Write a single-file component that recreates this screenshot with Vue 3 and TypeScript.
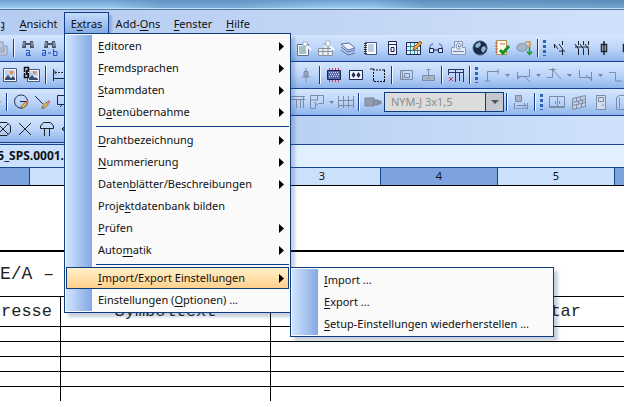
<script setup lang="ts">
import { ref } from 'vue'

interface Shape {
  d: string
  fill?: string
  stroke?: string
  width?: number
}

interface Tool {
  kind: 'icon' | 'sep' | 'grip' | 'arrow' | 'combo'
  icon?: string
  label?: string
}

interface Entry {
  label?: string
  children?: boolean
  separator?: boolean
}

const navy = '#1c2350'
const grey = '#7d8ba6'

const icons: Record<string, Shape[]> = {
  paste: [
    { d: 'M4 3h8v4h4v9H6v-2H4z', fill: '#c3cddd', stroke: '#8b98b2' },
    { d: 'M8 9h6M8 11h6M8 13h6', stroke: '#8b98b2' }
  ],
  find: [
    { d: 'M4 2h3v2h4V2h3l1 7h-4V6H7v3H3z', fill: '#4b5563' },
    { d: 'M5 3v4M13 3v4', stroke: '#a9bad8' },
    { d: 'M7 11.5h3.500v5h-3v-2.500h3M10.500 16.500h1.500', stroke: '#2553c4' }
  ],
  replace: [
    { d: 'M4 2h3v2h4V2h3l1 7h-4V6H7v3H3z', fill: '#4b5563' },
    { d: 'M5 3v4M13 3v4', stroke: '#a9bad8' },
    { d: 'M1 11.500h3.500v5h-3v-2.500h3M7 14h3M12.500 10v6.500h3.500v-4h-3.500', stroke: '#2553c4' }
  ],
  picture: [
    { d: 'M2.5 2.5h13v13h-13z', fill: '#f4f6fb', stroke: '#4a5878' },
    { d: 'M4 4h10v6H4z', fill: '#b9d2f4' },
    { d: 'M4 14v-2l3-3 3 3 2-2 2 2v2z', fill: '#3a4c72' },
    { d: 'M9 5h3v3H9z', fill: '#ef8a3c' }
  ],
  pictureLink: [
    { d: 'M4.5 3.5h12v12h-12z', fill: '#f4f6fb', stroke: '#4a5878' },
    { d: 'M6 5h9v5H6z', fill: '#b9d2f4' },
    { d: 'M6 14v-2l3-3 3 3 1-1 2 2v1z', fill: '#3a4c72' },
    { d: 'M10 5h3v3h-3z', fill: '#ef8a3c' },
    { d: 'M1.5 6V1.5h4V6M1.5 7v4.500h4V7M3.500 4v5', stroke: '#111', width: 1.5 }
  ],
  dimension: [
    { d: 'M2.500 3v12M2 12.500h15', stroke: navy },
    { d: 'M4 6.500h2m1 0h2m1 0h2m1 0h2M5 4.500l-2 2 2 2', stroke: '#333' }
  ],
  redPencil: [{ d: 'M9 10l5-3 3 2-5 3z', fill: '#cb3340' }],
  circlePencil: [
    { d: 'M9 2a6.500 6.500 0 1 0 .1 0M8 8.500h6', stroke: navy },
    { d: 'M9 15.500l1-3 3.500-3.500 2 2-3.500 3.500z', fill: '#e8bd52', stroke: '#856532' },
    { d: 'M13.500 8.500l1.500-1.500 2 2-1.500 1.500z', fill: '#d66a77' }
  ],
  linePencil: [
    { d: 'M1 3l8 8', stroke: navy },
    { d: 'M8 15.500l1-3 3.500-3.500 2 2-3.500 3.500z', fill: '#e8bd52', stroke: '#856532' },
    { d: 'M13 8.500l1.500-1.500 2 2-1.500 1.500z', fill: '#d66a77' }
  ],
  rectPencil: [{ d: 'M1.500 2.500h13v9h-13zM4 14l3-3', stroke: navy }],
  lamp: [
    { d: 'M5 2.500h8l3.500 3.500v6l-3.500 3.500H5L1.500 12V6z', stroke: '#222' },
    { d: 'M4 4l10 10M14 4L4 14', stroke: '#222' }
  ],
  cross: [{ d: 'M3 3l12 12M15 3L3 15', stroke: '#222' }],
  socket: [{ d: 'M2.500 8.500V6l3-3.500h7l3 3.500v2.500zM6.500 9v7M11.500 9v7', stroke: '#222' }],
  nav: [{ d: 'M2 9h4M5 6l-3 3 3 3', stroke: '#222' }],
  report: [
    { d: 'M2.500 5.500h11v11h-11z', fill: '#f4f7fc', stroke: '#62708f' },
    { d: 'M4 8h7M4 10h7M4 12h7M4 14h7', stroke: '#518b82' },
    { d: 'M8 3h4v4H8z', fill: '#fff', stroke: '#a3afc4' },
    { d: 'M12 7l4 4', stroke: '#fff', width: 2 }
  ],
  tiles: [
    { d: 'M1.500 9.500h14v7h-14zM6 5h5v11M1.500 12.500h14M6 9v7', fill: '#eef0ee', stroke: '#8791a3' },
    { d: 'M9 2h4v5H9z', fill: '#fff', stroke: '#a3afc4' },
    { d: 'M13 7l4 4', stroke: '#fff', width: 2 }
  ],
  layers: [
    { d: 'M2 5l8-1 6 5-7 2z', fill: '#eef3fc', stroke: '#5e6c9c' },
    { d: 'M2 8l7 5 7-2M2 11l7 5 7-2', stroke: '#5e6c9c' }
  ],
  notebook: [
    { d: 'M4.500 3.500h11v12h-11z', fill: '#fff', stroke: '#46598c' },
    { d: 'M7 6h6M7 8h6M7 10h6M7 12h6', stroke: '#7c9dc4' },
    { d: 'M3 4.500h3M3 6.500h3M3 8.500h3M3 10.500h3M3 12.500h3M3 14.500h3', stroke: '#333' }
  ],
  device: [
    { d: 'M5.500 2.500h8v13h-8z', fill: '#f3f6ff', stroke: navy },
    { d: 'M6 5.500h7M8 8.500h3v4H8z', stroke: navy }
  ],
  sheet: [
    { d: 'M1.500 3.500h14v12h-14z', fill: '#e6f1f4', stroke: navy },
    { d: 'M2 7.500h13M2 11.500h13M5.500 4v11M9.500 4v11M12.500 4v11', stroke: '#388099' },
    { d: 'M8 11l1-3 6-6 2 2-6 6z', fill: '#eaa63d', stroke: '#9b5c30' }
  ],
  glasses: [
    { d: 'M6 5c-3 0-3 3-3 5M12 5c3 0 3 3 3 5', stroke: '#3b4674' },
    { d: 'M2.500 9.500h4v4h-4zM11.500 9.500h4v4h-4zM7 11h4', fill: '#dbe9fb', stroke: navy }
  ],
  mail: [
    { d: 'M2.500 8.500h3V2.500h8v6h3v7h-14z', fill: '#e4ebf6', stroke: '#8b98b2' },
    { d: 'M11.500 9.500c-3 2-5-1-4-4 2-3 6 0 4 2.500h-2V6M4 12.500h11', stroke: '#6f84a8' }
  ],
  globe: [
    { d: 'M9 2a7 7 0 1 0 .1 0', fill: '#1b2944', stroke: '#4c607f' },
    { d: 'M5 5l4-2 1 3-3 3-3-1zM11 8l3-1 1 3-3 4-2-3z', fill: '#8db9d9' }
  ],
  check: [
    { d: 'M3.500 1.500h10v14h-10z', fill: '#fffbe9', stroke: '#b28a58' },
    { d: 'M2 4h3M2 7h3M2 10h3M2 13h3M7 5h5', stroke: '#cf6656' },
    { d: 'M7 11l3 3 6-7', stroke: '#159422', width: 3 }
  ],
  transfer: [
    { d: 'M2 8c0-4 9-5 10-1v3c-2 3-8 3-10 0z', fill: '#a7b5c8', stroke: '#8090a8' },
    { d: 'M10 3h5v4h-3', stroke: '#e4903a', width: 1.5 },
    { d: 'M14.500 8v7M12 12.500l2.500 3 2.500-3', stroke: '#1a9c2c', width: 1.5 }
  ],
  contact: [{ d: 'M11.500 2v4M11.500 10v6M11.500 10L8 5M4 6l3 4M3.500 5v4M8 12h6', stroke: '#20242e' }],
  contacts: [
    { d: 'M5.500 2v4m0 4v6m0-6L2 5M10.500 2v4m0 4v6m0-6L7 5M15.500 2v4m0 4v6m0-6L12 5M2 8h14', stroke: '#20242e' }
  ],
  fuse: [{ d: 'M9 2v14M6.500 5.500h5v7h-5z', stroke: '#20242e', width: 1.5 }],
  pin: [{ d: 'M9 2v3M7 5.500h4v5H7zM5 11h8M9 11v5', fill: '#98a5bb', stroke: grey }],
  chip: [
    { d: 'M4.500 2v14M7.500 2v14M10.500 2v14M13.500 2v14', stroke: '#d93455' },
    { d: 'M2.500 4.500h13v9h-13z', fill: '#5865a2', stroke: navy },
    { d: 'M4 6.500h1m1 0h1m1 0h1m1 0h1m1 0h1M5 8.500h1m1 0h1m1 0h1m1 0h1m1 0h1M4 10.500h1m1 0h1m1 0h1m1 0h1m1 0h1', stroke: '#d5defa' }
  ],
  terminal: [
    { d: 'M2.500 4.500h13v9h-13z', fill: '#edf3fb', stroke: navy },
    { d: 'M6.500 6l2 3-2 3-2-3zM11.500 6l2 3-2 3-2-3z', fill: '#252d50' }
  ],
  select: [
    { d: 'M4 4h2m1 0h2m1 0h2m1 0h3M15.500 4v2m0 1v2m0 1v2m0 1v3M4.500 6v2m0 1v2m0 1v3M5 15.500h2m1 0h2m1 0h2m1 0h2M1 3h4', stroke: '#111' }
  ],
  plate: [{ d: 'M3.500 4.500h12v9h-12zM7.500 7.500h5v4h-5zM5.500 5v8', stroke: grey }],
  stamp: [{ d: 'M3.500 9.500h12v5h-12zM9.500 9V3M7.500 3.500h4M8 12h3', fill: '#a9b5c8', stroke: grey }],
  rack: [
    { d: 'M1 3.500h16M1 6.500h16M8.500 4v12M12.500 7v8M16.500 4v12M1.500 4v5', stroke: '#29366a' },
    { d: 'M2 11l4 4M6 11l-4 4', stroke: '#d52c54' }
  ],
  rackOff: [{ d: 'M1 3.500h16M1 6.500h16M8.500 7v8M12.500 7v8M15.500 4v11', stroke: grey }],
  wireA: [{ d: 'M4.500 15V5.500H16M2 15h5M15 3v5', stroke: grey }],
  wireB: [{ d: 'M15.500 3v7.500H3M3.500 6v7M3.500 13l4-3M11 11l5 5', stroke: grey }],
  wireC: [{ d: 'M2 11.500h5.500V2M4 3.500h7M8 4l8 9', stroke: grey }],
  wireD: [{ d: 'M3.500 4v7.500H15M15.500 6v9M10 9l5 5', stroke: grey }],
  wireE: [{ d: 'M2 6.500h6.500V15H15', stroke: grey }],
  plan: [{ d: 'M2.500 15V2.500h13v8h-5M2.500 15.500h5v-5M9.500 3v4H3M10 12l-4-3', stroke: grey }],
  measure: [{ d: 'M1.500 3v12M6.500 3v12M11.500 3v12M16.500 3v12M1 7.500h16M1 12.500h16', stroke: grey }],
  plug: [{ d: 'M1 5h9v8H1zM10 7h4v5h-4zM14 8h3v3h-3z', fill: '#929cad', stroke: '#78849a' }],
  distance: [
    { d: 'M3.500 2.500h6v6h-6z', fill: '#a9b3c4', stroke: grey },
    { d: 'M2.500 10v6M15.500 10v6M5 12.500h9M4 15.500h2m1 0h2m1 0h2m1 0h2M12 10l2 2.500-2 2', stroke: grey }
  ],
  cabinet: [{ d: 'M1.500 3.500h15v11h-15zM9.500 4v10M7.500 8v3M11.500 8v3M2 13.500h14', stroke: grey }],
  wall: [
    { d: 'M2.500 5.500l13-3v11l-13 3z', fill: '#c4d0e2', stroke: grey },
    { d: 'M2.500 9.500l13-3M2.500 12.500l13-3M6.500 5v4M10.500 4v4M8.500 8v4M12.500 7v4M6.500 12v4M11.500 10v4', stroke: grey }
  ],
  door: [{ d: 'M4.500 2.500h9v14h-9zM6.500 4.500h5v4h-5zM10 12h2', fill: '#d2dded', stroke: grey }],
  box: [{ d: 'M2.500 4.500l3-2h8v14h-11zM5.500 5v10', stroke: grey }]
}

const icon = (name: string, label: string): Tool => ({ kind: 'icon', icon: name, label })
const sep: Tool = { kind: 'sep' }
const grip: Tool = { kind: 'grip' }
const arrow: Tool = { kind: 'arrow', label: 'Auswahl' }

const rows: { name: string; left: Tool[]; right: Tool[] }[] = [
  {
    name: 'search',
    left: [icon('paste', 'Einfügen'), sep, icon('find', 'Suchen'), icon('replace', 'Ersetzen')],
    right: [
      icon('report', 'Bericht'), icon('tiles', 'Blätter'), icon('layers', 'Ebenen'), icon('notebook', 'Verzeichnis'),
      icon('device', 'Gerät'), icon('sheet', 'Tabelle'), icon('glasses', 'Ansicht'), icon('mail', 'Senden'),
      icon('globe', 'Internet'), icon('check', 'Kontrolle'), icon('transfer', 'Übertragen'), sep, grip,
      icon('contact', 'Kontakt'), icon('contacts', 'Kontakte'), icon('fuse', 'Sicherung'), icon('fuse', 'Sicherungen')
    ]
  },
  {
    name: 'insert',
    left: [icon('picture', 'Bild'), icon('pictureLink', 'Bild verknüpfen'), sep, icon('dimension', 'Bemaßung')],
    right: [
      icon('pin', 'Stift'), sep, icon('chip', 'Baustein'), icon('terminal', 'Klemme'), icon('select', 'Bereich'), sep,
      icon('plate', 'Platte'), icon('stamp', 'Stempel'), sep, icon('rack', 'Schiene'), sep, grip,
      icon('wireA', 'Verbindung 1'), arrow, icon('wireB', 'Verbindung 2'), arrow, icon('wireC', 'Verbindung 3'), arrow,
      icon('wireD', 'Verbindung 4'), arrow, icon('wireE', 'Verbindung 5')
    ]
  },
  {
    name: 'draw',
    left: [icon('redPencil', 'Stift'), sep, icon('circlePencil', 'Kreis'), icon('linePencil', 'Linie'), icon('rectPencil', 'Rechteck')],
    right: [
      icon('rackOff', 'Schiene'), icon('plan', 'Grundriss'), arrow, icon('measure', 'Maß'), sep, icon('plug', 'Kabel'),
      { kind: 'combo' }, sep, icon('distance', 'Abstand'), sep, grip, icon('cabinet', 'Schrank'), icon('wall', 'Wand'),
      icon('door', 'Tür'), icon('box', 'Gehäuse')
    ]
  },
  {
    name: 'symbols',
    left: [icon('lamp', 'Leuchte'), icon('cross', 'Kreuz'), icon('socket', 'Steckdose'), icon('nav', 'Zurück')],
    right: []
  }
]

const menus = ['Bearbeitun&g', '&Ansicht', 'E&xtras', 'Add-&Ons', '&Fenster', '&Hilfe']

const entries: Entry[] = [
  { label: '&Editoren', children: true },
  { label: '&Fremdsprachen', children: true },
  { label: '&Stammdaten', children: true },
  { label: 'D&atenübernahme', children: true },
  { separator: true },
  { label: '&Drahtbezeichnung', children: true },
  { label: '&Nummerierung', children: true },
  { label: 'Daten&blätter/Beschreibungen', children: true },
  { label: 'Proje&ktdatenbank bilden' },
  { label: '&Prüfen', children: true },
  { label: 'Auto&matik', children: true },
  { separator: true },
  { label: '&Import/Export Einstellungen', children: true },
  { label: 'Einstellungen (&Optionen) ...' }
]
const subEntries = ['&Import ...', '&Export ...', '&Setup-Einstellungen wiederherstellen ...']

const openMenu = ref('E&xtras')
const openEntry = ref('&Import/Export Einstellungen')
const cable = ref('NYM-J 3x1,5')

/** Splits "E&xtras" into the text before, at and after its access key. */
function parts(label: string): [string, string, string] {
  const at = label.indexOf('&')
  return [label.slice(0, at), label.charAt(at + 1), label.slice(at + 2)]
}
</script>

<template>
  <div class="app">
    <header class="title"></header>
    <nav class="menubar">
      <div v-for="m in menus" :key="m" class="menu">
        <button class="menu-button" :class="{ open: m === openMenu }" type="button" @click="openMenu = m">
          <span>{{ parts(m)[0] }}<u v-if="m !== 'Bearbeitun&g'">{{ parts(m)[1] }}</u><template v-else>{{ parts(m)[1] }}</template>{{ parts(m)[2] }}</span>
        </button>
        <ul v-if="m === 'E&xtras' && m === openMenu" class="popup">
          <li v-for="(e, i) in entries" :key="i" :class="e.separator ? 'divider' : 'row'">
            <button v-if="e.label" type="button" class="entry" :class="{ active: e.label === openEntry }" @click="openEntry = e.label">
              <span>{{ parts(e.label)[0] }}<u>{{ parts(e.label)[1] }}</u>{{ parts(e.label)[2] }}</span>
              <svg v-if="e.children" class="more" viewBox="0 0 5 9" aria-hidden="true"><path d="M0 0l5 4.500L0 9z" /></svg>
            </button>
            <ul v-if="e.label === '&Import/Export Einstellungen' && e.label === openEntry" class="popup sub">
              <li v-for="s in subEntries" :key="s" class="row">
                <button type="button" class="entry">
                  <span>{{ parts(s)[0] }}<u>{{ parts(s)[1] }}</u>{{ parts(s)[2] }}</span>
                </button>
              </li>
            </ul>
          </li>
        </ul>
      </div>
    </nav>

    <div class="toolbars">
      <div v-for="r in rows" :key="r.name" class="toolbar" :class="r.name" role="toolbar">
        <div v-for="side in (['left', 'right'] as const)" :key="side" class="group" :class="side">
          <template v-for="(t, i) in r[side]" :key="i">
            <i v-if="t.kind === 'sep'" class="sep"></i>
            <i v-else-if="t.kind === 'grip'" class="grip"></i>
            <button v-else-if="t.kind === 'arrow'" type="button" class="drop" :aria-label="t.label">
              <svg viewBox="0 0 5 3"><path d="M0 0h5L2.500 3z" /></svg>
            </button>
            <div v-else-if="t.kind === 'combo'" class="combo">
              <select v-model="cable" aria-label="Kabeltyp" disabled>
                <option>NYM-J 3x1,5</option>
              </select>
              <span class="combo-arrow"><svg viewBox="0 0 8 4"><path d="M0 0h8L4 4z" /></svg></span>
            </div>
            <button v-else type="button" class="tool" :aria-label="t.label">
              <svg viewBox="0 0 18 18">
                <path
                  v-for="(s, k) in icons[t.icon ?? 'cross']"
                  :key="k"
                  :d="s.d"
                  :fill="s.fill ?? 'none'"
                  :stroke="s.stroke ?? 'none'"
                  :stroke-width="s.width ?? 1"
                />
              </svg>
            </button>
          </template>
        </div>
      </div>
    </div>

    <div class="tabs"><button type="button" class="tab"><span>5_SPS.0001.</span></button></div>
    <div class="ruler">
      <span v-for="n in 7" :key="n" :class="{ dark: n % 2 === 1 }">{{ n > 1 && n < 7 ? n - 1 : '' }}</span>
    </div>

    <main class="page">
      <h1>E/A – Verzeichnis</h1>
      <table>
        <thead>
          <tr>
            <th class="address"><div>Adresse</div></th>
            <th class="symbol">Symboltext</th>
            <th class="comment">Kommentar</th>
          </tr>
        </thead>
        <tbody>
          <tr v-for="n in 5" :key="n"><td></td><td></td><td></td></tr>
        </tbody>
      </table>
    </main>
  </div>
</template>

<style>
body {
  background: #fff;
  overflow: hidden;
}
</style>

<style scoped>
.app {
  margin-right: 6px;
  overflow: hidden;
  font-family: "Noto Sans", "Open Sans", sans-serif;
  font-size: 11px;
  line-height: 16px;
  color: #111;
}
button {
  margin: 0;
  padding: 0;
  border: 0;
  background: none;
  font: inherit;
  color: inherit;
}
ul {
  margin: 0;
  padding: 0;
  list-style: none;
}
svg {
  display: block;
}
u {
  text-underline-offset: 2px;
}

.title {
  height: 8px;
  border-bottom: 1px solid #b9e0fa;
  background:
    linear-gradient(90deg, transparent 18%, #4f7eae66 26%, #4f7eae66 38%, transparent 52%, transparent 60%, #3f6a9755 68%, #3f6a9755 80%, #3f6a9766 100%),
    linear-gradient(#6d9fd0, #9ccaf0);
}
.menubar {
  display: grid;
  grid-template-columns: 13px 51px 45px 58px 52px 38px;
  height: 22px;
  padding: 2px 0 1px;
  border-top: 1px solid #5b7396;
  background: linear-gradient(90deg, #b5cdf2, #c2d5f4 55%, #d0e2fb);
}
.menu {
  position: relative;
  display: flex;
  min-width: 0;
}
.menu-button {
  flex: 1;
  display: flex;
  justify-content: center;
  align-items: center;
  min-width: 0;
  padding-top: 1px;
  border: 1px solid transparent;
  white-space: nowrap;
}
.menu:first-child .menu-button {
  justify-content: flex-end;
  overflow: hidden;
  padding-right: 7px;
}
.menu-button.open {
  border-color: #0f3c8c;
  background: linear-gradient(#c4dcfb, #86abe4);
  box-shadow: 3px 3px 2px #4a68a055;
}

.popup {
  position: absolute;
  top: 21px;
  left: 0;
  z-index: 2;
  box-sizing: border-box;
  width: 227px;
  padding: 1px;
  border: 1px solid #0f3c7c;
  background: linear-gradient(90deg, #d0e4ff, #83a8e3) 1px 1px / 26px calc(100% - 2px) no-repeat #fafafa;
  box-shadow: 4px 4px 3px #35518444;
}
.row {
  position: relative;
  height: 22px;
}
.divider {
  height: 6px;
}
.divider::before {
  content: "";
  display: block;
  margin-left: 30px;
  border-bottom: 1px solid #0f3c7c;
  padding-top: 3px;
}
.entry {
  display: flex;
  align-items: center;
  justify-content: space-between;
  box-sizing: border-box;
  width: 100%;
  height: 22px;
  padding: 0 4px 0 31px;
  border: 1px solid transparent;
  white-space: nowrap;
}
.entry.active {
  border-color: #0f3c7c;
  background: linear-gradient(#fff0c8, #ffd08c);
}
.more {
  width: 5px;
  height: 9px;
}
.sub {
  top: 0;
  left: 224px;
  width: 264px;
}

.toolbars {
  border-bottom: 1px solid #1b4590;
  background: linear-gradient(90deg, #b9d0f3 45%, #d0e2fb);
  padding-bottom: 1px;
}
.toolbar {
  display: grid;
  grid-template-columns: 80px 205px minmax(0, 1fr);
  height: 26px;
  border-bottom: 1px solid #123f8f;
  background: linear-gradient(#d5e6fd, #bcd5fa 50%, #8fb5ec);
}
.symbols {
  width: 290px;
}
.group {
  display: flex;
  align-items: center;
}
.right {
  grid-column: 3;
}
.search .left { margin-left: -11px; }
.search .right { padding-left: 8px; }
.insert .left { margin-left: -1px; }
.insert .right { padding-left: 10px; }
.draw .left { margin-left: -18px; }
.draw .right { padding-left: 2px; }
.symbols .left { margin-left: -8px; }
.tool {
  flex: none;
  display: grid;
  place-items: center;
  width: 22px;
  height: 22px;
}
.draw .right .tool:nth-child(-n + 4) {
  width: 20px;
}
.tool svg {
  width: 18px;
  height: 18px;
}
.sep {
  flex: none;
  width: 2px;
  height: 18px;
  margin: 0 2px;
  background: linear-gradient(90deg, #0f3c8c 50%, #eef6ff 50%);
}
.grip {
  flex: none;
  width: 3px;
  height: 16px;
  margin: 0 3px 0 2px;
  background: repeating-linear-gradient(#2d63b8 0 3px, transparent 3px 5px);
}
.drop {
  flex: none;
  display: grid;
  place-items: center;
  width: 9px;
  height: 22px;
}
.drop svg {
  width: 5px;
  height: 3px;
  fill: #7b869c;
}
.combo {
  flex: none;
  display: flex;
  box-sizing: border-box;
  width: 120px;
  height: 20px;
  border: 1px solid #0f3c7c;
  background: #dcdcdc;
}
.combo select {
  flex: 1;
  min-width: 0;
  appearance: none;
  margin: 0;
  padding: 0 6px;
  border: 0;
  background: none;
  font: inherit;
  color: #8c8c8c;
  opacity: 1;
}
.combo-arrow {
  display: grid;
  place-items: center;
  width: 17px;
  border-left: 1px solid #0f3c7c;
  background: #c3c8d0;
}
.combo-arrow svg {
  width: 8px;
  height: 4px;
  fill: #555;
}

.tabs {
  display: flex;
  height: 22px;
  background: #e0f0ff;
}
.tab {
  display: flex;
  justify-content: flex-end;
  align-items: center;
  width: 64px;
  overflow: hidden;
  background: #cbe0fc;
  font-weight: 700;
  font-size: 12px;
}
.ruler {
  display: grid;
  grid-template-columns: 30fr repeat(5, 117fr) 9fr;
  height: 17px;
  border-top: 1px solid #17468f;
  border-bottom: 1px solid #000;
  background: #cbe0fa;
}
.ruler span {
  min-width: 0;
  overflow: hidden;
  border-right: 1px solid #17468f;
  text-align: center;
}
.ruler span:last-child {
  border: 0;
}
.ruler .dark {
  background: #7da3df;
}

.page {
  padding-top: 64px;
  background: #fff;
  font-family: "Liberation Mono", monospace;
  font-size: 17px;
  color: #222;
}
h1 {
  margin: 0;
  padding-top: 12px;
  height: 32px;
  border-top: 2px solid #000;
  font: inherit;
  font-size: 18px;
  line-height: 20px;
}
table {
  width: 100%;
  border-collapse: collapse;
  table-layout: fixed;
}
th,
td {
  padding: 0;
  border: 1px solid #000;
  border-width: 1px 0 0 1px;
  font-weight: 400;
}
th {
  height: 29px;
}
td {
  height: 14px;
}
th:first-child,
td:first-child {
  width: 60px;
  border-left: 0;
}
.address div {
  display: flex;
  justify-content: flex-end;
  overflow: hidden;
  padding-right: 8px;
}
.symbol {
  width: 209px;
}
.comment {
  padding-right: 43px;
  text-align: right;
}
</style>
